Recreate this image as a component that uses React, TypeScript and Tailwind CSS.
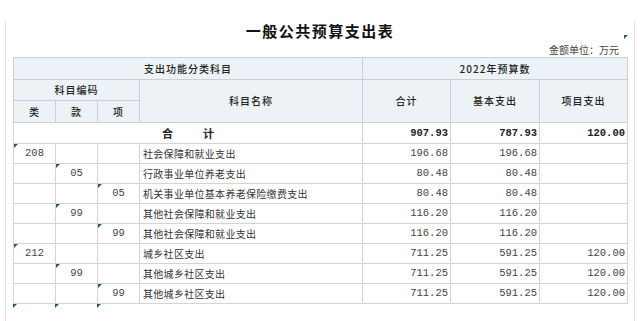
type Row = {
  lei?: string;
  kuan?: string;
  xiang?: string;
  name: string;
  total: string;
  basic: string;
  proj?: string;
};

const rows: Row[] = [
  { lei: "208", name: "社会保障和就业支出", total: "196.68", basic: "196.68" },
  { kuan: "05", name: "行政事业单位养老支出", total: "80.48", basic: "80.48" },
  { xiang: "05", name: "机关事业单位基本养老保险缴费支出", total: "80.48", basic: "80.48" },
  { kuan: "99", name: "其他社会保障和就业支出", total: "116.20", basic: "116.20" },
  { xiang: "99", name: "其他社会保障和就业支出", total: "116.20", basic: "116.20" },
  { lei: "212", name: "城乡社区支出", total: "711.25", basic: "591.25", proj: "120.00" },
  { kuan: "99", name: "其他城乡社区支出", total: "711.25", basic: "591.25", proj: "120.00" },
  { xiang: "99", name: "其他城乡社区支出", total: "711.25", basic: "591.25", proj: "120.00" },
];

const cjk = "font-['Noto_Sans_CJK_SC',sans-serif]";
const mono = "font-['Liberation_Mono','Noto_Sans_CJK_SC',monospace]";
const th = "border border-[#c9d0d7] bg-[#edf2f7] p-0 font-medium text-[#222] text-[10px] leading-none tracking-[1px]";
const td = "border border-[#d2d5d8] p-0 leading-none";

function Marker() {
  return (
    <span className="absolute left-0 top-0 w-0 h-0 border-t-[4px] border-r-[4px] border-t-[#1f6b2a] border-r-transparent" />
  );
}

function CodeCell({ code }: { code?: string }) {
  return (
    <td className={`${td} relative text-center ${mono} text-[10.5px] text-[#444]`}>
      {code && <Marker />}
      {code}
    </td>
  );
}

function Num({ v, bold }: { v?: string; bold?: boolean }) {
  return (
    <td className={`${td} text-right pr-[2px] ${mono} text-[10.5px] ${bold ? "font-bold text-[#222]" : "text-[#444]"}`}>
      {v}
    </td>
  );
}

export default function App() {
  return (
    <div className={`w-[640px] h-[321px] bg-white pt-[5px] px-[5px] ${cjk}`}>
      <div className="relative h-[300px] border-x border-[#e2e2e2]">
        <span className="absolute right-[6px] top-[14px] w-0 h-0 border-t-[4px] border-r-[4px] border-t-[#1f6b2a] border-r-transparent" />
        <h1 className="mt-[16px] h-[20px] text-center text-[15px] leading-[20px] font-bold tracking-[1.5px] text-[#111]">
          一般公共预算支出表
        </h1>
        <div className="mt-[3px] h-[12px] pr-[15px] text-right text-[10px] leading-[12px] text-[#444]">
          金额单位：万元
        </div>
        <table className="mt-[1px] ml-[7px] w-[614px] table-fixed border-collapse">
          <colgroup>
            <col className="w-[42px]" />
            <col className="w-[42px]" />
            <col className="w-[42px]" />
            <col className="w-[223px]" />
            <col className="w-[88px]" />
            <col className="w-[89px]" />
            <col className="w-[88px]" />
          </colgroup>
          <thead>
            <tr className="h-[22px]">
              <th colSpan={4} className={th}>支出功能分类科目</th>
              <th colSpan={3} className={th}>2022年预算数</th>
            </tr>
            <tr className="h-[21px]">
              <th colSpan={3} className={th}>科目编码</th>
              <th rowSpan={2} className={th}>科目名称</th>
              <th rowSpan={2} className={th}>合计</th>
              <th rowSpan={2} className={th}>基本支出</th>
              <th rowSpan={2} className={th}>项目支出</th>
            </tr>
            <tr className="h-[22px]">
              <th className={th}>类</th>
              <th className={th}>款</th>
              <th className={th}>项</th>
            </tr>
          </thead>
          <tbody>
            <tr className="h-[21px]">
              <td colSpan={4} className={`${td} text-center text-[11px] font-bold text-[#222]`}>
                合<span className="inline-block w-[30px]" />计
              </td>
              <Num v="907.93" bold />
              <Num v="787.93" bold />
              <Num v="120.00" bold />
            </tr>
            {rows.map((r, i) => (
              <tr key={i} className="h-[20px]">
                <CodeCell code={r.lei} />
                <CodeCell code={r.kuan} />
                <CodeCell code={r.xiang} />
                <td className={`${td} pl-[3px] text-left text-[10px] tracking-[0.3px] text-[#333] whitespace-nowrap`}>{r.name}</td>
                <Num v={r.total} />
                <Num v={r.basic} />
                <Num v={r.proj} />
              </tr>
            ))}
          </tbody>
        </table>
        <div className="ml-[7px] flex">
          <div className="relative w-[42px] h-[4px]"><Marker /></div>
          <div className="relative w-[42px] h-[4px]"><Marker /></div>
          <div className="relative w-[42px] h-[4px]"><Marker /></div>
        </div>
      </div>
      <div className="mt-[8px] border-t border-[#e2e2e2]" />
    </div>
  );
}
